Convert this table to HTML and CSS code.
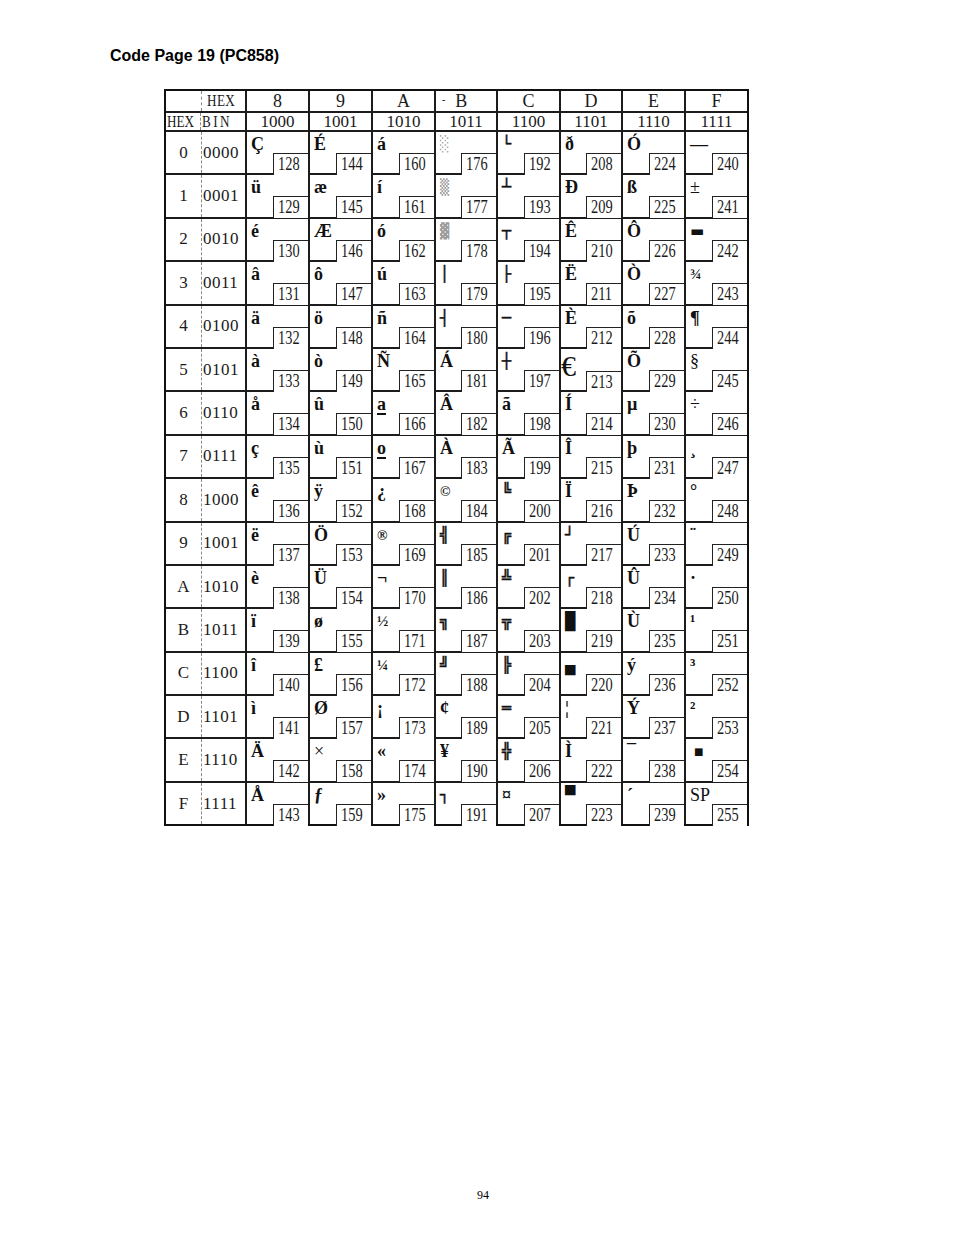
FILE: index.html
```html
<!DOCTYPE html>
<html>
<head>
<meta charset="utf-8">
<title>Code Page 19 (PC858)</title>
<link rel="stylesheet" href="styles.css">
</head>
<body>
<div class="page">
  <h1 class="title">Code Page 19 (PC858)</h1>
  <div class="table">
    <div class="lab hd1"><span class="lx"></span><span class="lb"><span class="nar">HEX</span></span></div>
    <div class="hd1 hc">8</div><div class="hd1 hc">9</div><div class="hd1 hc">A</div><div class="hd1 hc hb"><span class="tick">-</span>B</div><div class="hd1 hc">C</div><div class="hd1 hc">D</div><div class="hd1 hc">E</div><div class="hd1 hc">F</div>

    <div class="lab hd2"><span class="lx"><span class="nar">HEX</span></span><span class="lb"><span class="nar sp">BIN</span></span></div>
    <div class="hd2 hc">1000</div><div class="hd2 hc">1001</div><div class="hd2 hc">1010</div><div class="hd2 hc">1011</div><div class="hd2 hc">1100</div><div class="hd2 hc">1101</div><div class="hd2 hc">1110</div><div class="hd2 hc">1111</div>

    <div class="lab"><span class="lx">0</span><span class="lb">0000</span></div>
    <div class="c"><span class="g">Ç</span><span class="n"><i>128</i></span></div>
    <div class="c"><span class="g">É</span><span class="n"><i>144</i></span></div>
    <div class="c"><span class="g">á</span><span class="n"><i>160</i></span></div>
    <div class="c"><span class="g sh">░</span><span class="n"><i>176</i></span></div>
    <div class="c"><span class="g bx">└</span><span class="n"><i>192</i></span></div>
    <div class="c"><span class="g">ð</span><span class="n"><i>208</i></span></div>
    <div class="c"><span class="g">Ó</span><span class="n"><i>224</i></span></div>
    <div class="c"><span class="g">—</span><span class="n"><i>240</i></span></div>

    <div class="lab"><span class="lx">1</span><span class="lb">0001</span></div>
    <div class="c"><span class="g">ü</span><span class="n"><i>129</i></span></div>
    <div class="c"><span class="g">æ</span><span class="n"><i>145</i></span></div>
    <div class="c"><span class="g">í</span><span class="n"><i>161</i></span></div>
    <div class="c"><span class="g sh">▒</span><span class="n"><i>177</i></span></div>
    <div class="c"><span class="g bx">┴</span><span class="n"><i>193</i></span></div>
    <div class="c"><span class="g">Ð</span><span class="n"><i>209</i></span></div>
    <div class="c"><span class="g">ß</span><span class="n"><i>225</i></span></div>
    <div class="c"><span class="g lt">±</span><span class="n"><i>241</i></span></div>

    <div class="lab"><span class="lx">2</span><span class="lb">0010</span></div>
    <div class="c"><span class="g">é</span><span class="n"><i>130</i></span></div>
    <div class="c"><span class="g">Æ</span><span class="n"><i>146</i></span></div>
    <div class="c"><span class="g">ó</span><span class="n"><i>162</i></span></div>
    <div class="c"><span class="g sh">▓</span><span class="n"><i>178</i></span></div>
    <div class="c"><span class="g bx">┬</span><span class="n"><i>194</i></span></div>
    <div class="c"><span class="g">Ê</span><span class="n"><i>210</i></span></div>
    <div class="c"><span class="g">Ô</span><span class="n"><i>226</i></span></div>
    <div class="c"><span class="g bar">▬</span><span class="n"><i>242</i></span></div>

    <div class="lab"><span class="lx">3</span><span class="lb">0011</span></div>
    <div class="c"><span class="g">â</span><span class="n"><i>131</i></span></div>
    <div class="c"><span class="g">ô</span><span class="n"><i>147</i></span></div>
    <div class="c"><span class="g">ú</span><span class="n"><i>163</i></span></div>
    <div class="c"><span class="g bx">│</span><span class="n"><i>179</i></span></div>
    <div class="c"><span class="g bx">├</span><span class="n"><i>195</i></span></div>
    <div class="c"><span class="g">Ë</span><span class="n"><i>211</i></span></div>
    <div class="c"><span class="g">Ò</span><span class="n"><i>227</i></span></div>
    <div class="c"><span class="g fr">¾</span><span class="n"><i>243</i></span></div>

    <div class="lab"><span class="lx">4</span><span class="lb">0100</span></div>
    <div class="c"><span class="g">ä</span><span class="n"><i>132</i></span></div>
    <div class="c"><span class="g">ö</span><span class="n"><i>148</i></span></div>
    <div class="c"><span class="g">ñ</span><span class="n"><i>164</i></span></div>
    <div class="c"><span class="g bx">┤</span><span class="n"><i>180</i></span></div>
    <div class="c"><span class="g bx">─</span><span class="n"><i>196</i></span></div>
    <div class="c"><span class="g">È</span><span class="n"><i>212</i></span></div>
    <div class="c"><span class="g">õ</span><span class="n"><i>228</i></span></div>
    <div class="c"><span class="g">¶</span><span class="n"><i>244</i></span></div>

    <div class="lab"><span class="lx">5</span><span class="lb">0101</span></div>
    <div class="c"><span class="g">à</span><span class="n"><i>133</i></span></div>
    <div class="c"><span class="g">ò</span><span class="n"><i>149</i></span></div>
    <div class="c"><span class="g">Ñ</span><span class="n"><i>165</i></span></div>
    <div class="c"><span class="g">Á</span><span class="n"><i>181</i></span></div>
    <div class="c"><span class="g bx">┼</span><span class="n"><i>197</i></span></div>
    <div class="c"><span class="g eu">€</span><span class="n"><i>213</i></span></div>
    <div class="c"><span class="g">Õ</span><span class="n"><i>229</i></span></div>
    <div class="c"><span class="g lt">§</span><span class="n"><i>245</i></span></div>

    <div class="lab"><span class="lx">6</span><span class="lb">0110</span></div>
    <div class="c"><span class="g">å</span><span class="n"><i>134</i></span></div>
    <div class="c"><span class="g">û</span><span class="n"><i>150</i></span></div>
    <div class="c"><span class="g ul">a</span><span class="n"><i>166</i></span></div>
    <div class="c"><span class="g">Â</span><span class="n"><i>182</i></span></div>
    <div class="c"><span class="g">ã</span><span class="n"><i>198</i></span></div>
    <div class="c"><span class="g">Í</span><span class="n"><i>214</i></span></div>
    <div class="c"><span class="g">µ</span><span class="n"><i>230</i></span></div>
    <div class="c"><span class="g lt">÷</span><span class="n"><i>246</i></span></div>

    <div class="lab"><span class="lx">7</span><span class="lb">0111</span></div>
    <div class="c"><span class="g">ç</span><span class="n"><i>135</i></span></div>
    <div class="c"><span class="g">ù</span><span class="n"><i>151</i></span></div>
    <div class="c"><span class="g ul">o</span><span class="n"><i>167</i></span></div>
    <div class="c"><span class="g">À</span><span class="n"><i>183</i></span></div>
    <div class="c"><span class="g">Ã</span><span class="n"><i>199</i></span></div>
    <div class="c"><span class="g">Î</span><span class="n"><i>215</i></span></div>
    <div class="c"><span class="g">þ</span><span class="n"><i>231</i></span></div>
    <div class="c"><span class="g">¸</span><span class="n"><i>247</i></span></div>

    <div class="lab"><span class="lx">8</span><span class="lb">1000</span></div>
    <div class="c"><span class="g">ê</span><span class="n"><i>136</i></span></div>
    <div class="c"><span class="g">ÿ</span><span class="n"><i>152</i></span></div>
    <div class="c"><span class="g">¿</span><span class="n"><i>168</i></span></div>
    <div class="c"><span class="g sm">©</span><span class="n"><i>184</i></span></div>
    <div class="c"><span class="g bx">╚</span><span class="n"><i>200</i></span></div>
    <div class="c"><span class="g">Ï</span><span class="n"><i>216</i></span></div>
    <div class="c"><span class="g">Þ</span><span class="n"><i>232</i></span></div>
    <div class="c"><span class="g">°</span><span class="n"><i>248</i></span></div>

    <div class="lab"><span class="lx">9</span><span class="lb">1001</span></div>
    <div class="c"><span class="g">ë</span><span class="n"><i>137</i></span></div>
    <div class="c"><span class="g">Ö</span><span class="n"><i>153</i></span></div>
    <div class="c"><span class="g sm">®</span><span class="n"><i>169</i></span></div>
    <div class="c"><span class="g bx">╣</span><span class="n"><i>185</i></span></div>
    <div class="c"><span class="g bx">╔</span><span class="n"><i>201</i></span></div>
    <div class="c"><span class="g bx">┘</span><span class="n"><i>217</i></span></div>
    <div class="c"><span class="g">Ú</span><span class="n"><i>233</i></span></div>
    <div class="c"><span class="g">¨</span><span class="n"><i>249</i></span></div>

    <div class="lab"><span class="lx">A</span><span class="lb">1010</span></div>
    <div class="c"><span class="g">è</span><span class="n"><i>138</i></span></div>
    <div class="c"><span class="g">Ü</span><span class="n"><i>154</i></span></div>
    <div class="c"><span class="g">¬</span><span class="n"><i>170</i></span></div>
    <div class="c"><span class="g bx">║</span><span class="n"><i>186</i></span></div>
    <div class="c"><span class="g bx">╩</span><span class="n"><i>202</i></span></div>
    <div class="c"><span class="g bx">┌</span><span class="n"><i>218</i></span></div>
    <div class="c"><span class="g">Û</span><span class="n"><i>234</i></span></div>
    <div class="c"><span class="g">·</span><span class="n"><i>250</i></span></div>

    <div class="lab"><span class="lx">B</span><span class="lb">1011</span></div>
    <div class="c"><span class="g">ï</span><span class="n"><i>139</i></span></div>
    <div class="c"><span class="g">ø</span><span class="n"><i>155</i></span></div>
    <div class="c"><span class="g fr">½</span><span class="n"><i>171</i></span></div>
    <div class="c"><span class="g bx">╗</span><span class="n"><i>187</i></span></div>
    <div class="c"><span class="g bx">╦</span><span class="n"><i>203</i></span></div>
    <div class="c"><span class="g blk">█</span><span class="n"><i>219</i></span></div>
    <div class="c"><span class="g">Ù</span><span class="n"><i>235</i></span></div>
    <div class="c"><span class="g">¹</span><span class="n"><i>251</i></span></div>

    <div class="lab"><span class="lx">C</span><span class="lb">1100</span></div>
    <div class="c"><span class="g">î</span><span class="n"><i>140</i></span></div>
    <div class="c"><span class="g">£</span><span class="n"><i>156</i></span></div>
    <div class="c"><span class="g fr">¼</span><span class="n"><i>172</i></span></div>
    <div class="c"><span class="g bx">╝</span><span class="n"><i>188</i></span></div>
    <div class="c"><span class="g bx">╠</span><span class="n"><i>204</i></span></div>
    <div class="c"><span class="g blk">▄</span><span class="n"><i>220</i></span></div>
    <div class="c"><span class="g">ý</span><span class="n"><i>236</i></span></div>
    <div class="c"><span class="g">³</span><span class="n"><i>252</i></span></div>

    <div class="lab"><span class="lx">D</span><span class="lb">1101</span></div>
    <div class="c"><span class="g">ì</span><span class="n"><i>141</i></span></div>
    <div class="c"><span class="g">Ø</span><span class="n"><i>157</i></span></div>
    <div class="c"><span class="g">¡</span><span class="n"><i>173</i></span></div>
    <div class="c"><span class="g">¢</span><span class="n"><i>189</i></span></div>
    <div class="c"><span class="g bx">═</span><span class="n"><i>205</i></span></div>
    <div class="c"><span class="g">¦</span><span class="n"><i>221</i></span></div>
    <div class="c"><span class="g">Ý</span><span class="n"><i>237</i></span></div>
    <div class="c"><span class="g">²</span><span class="n"><i>253</i></span></div>

    <div class="lab"><span class="lx">E</span><span class="lb">1110</span></div>
    <div class="c"><span class="g">Ä</span><span class="n"><i>142</i></span></div>
    <div class="c"><span class="g lt">×</span><span class="n"><i>158</i></span></div>
    <div class="c"><span class="g">«</span><span class="n"><i>174</i></span></div>
    <div class="c"><span class="g">¥</span><span class="n"><i>190</i></span></div>
    <div class="c"><span class="g bx">╬</span><span class="n"><i>206</i></span></div>
    <div class="c"><span class="g">Ì</span><span class="n"><i>222</i></span></div>
    <div class="c"><span class="g">¯</span><span class="n"><i>238</i></span></div>
    <div class="c"><span class="g sq">■</span><span class="n"><i>254</i></span></div>

    <div class="lab"><span class="lx">F</span><span class="lb">1111</span></div>
    <div class="c"><span class="g">Å</span><span class="n"><i>143</i></span></div>
    <div class="c"><span class="g">ƒ</span><span class="n"><i>159</i></span></div>
    <div class="c"><span class="g">»</span><span class="n"><i>175</i></span></div>
    <div class="c"><span class="g bx">┐</span><span class="n"><i>191</i></span></div>
    <div class="c"><span class="g">¤</span><span class="n"><i>207</i></span></div>
    <div class="c"><span class="g blk">▀</span><span class="n"><i>223</i></span></div>
    <div class="c"><span class="g">´</span><span class="n"><i>239</i></span></div>
    <div class="c"><span class="g spc">SP</span><span class="n"><i>255</i></span></div>
  </div>
  <div class="folio">94</div>
</div>
</body>
</html>
```

FILE: styles.css
```css
html, body {
  margin: 0;
  padding: 0;
  background: #fff;
}

.page {
  width: 954px;
  padding-top: 47px;
  color: #111;
}

.title {
  margin: 0 0 0 110px;
  font: bold 16px/18px "Liberation Sans", Arial, sans-serif;
  color: #000;
}

.table {
  margin: 24px 0 0 164px;
  width: max-content;
  display: grid;
  grid-template-columns: 79px 61px 61px 61px 60px 61px 60px 61px 61px;
  grid-template-rows: 20px 17px repeat(16, 41.4px);
  gap: 2px;
  background: #1c1c1c;
  border: 2px solid #111;
  font-family: "Liberation Serif", "Times New Roman", serif;
}

.table > div {
  background: #fff;
}

/* header cells */
.hc {
  display: flex;
  align-items: center;
  justify-content: center;
  color: #1a1a1a;
  overflow: hidden;
}

.hd1 {
  font-size: 18px;
  line-height: 20px;
}

.hd2 {
  font-size: 17px;
  line-height: 17px;
}

.hb {
  justify-content: flex-start;
  padding-left: 6px;
  gap: 10px;
}

.tick {
  font-size: 10px;
  line-height: 10px;
  font-weight: bold;
  margin-top: -3px;
}

.nar {
  display: inline-block;
  transform: scaleX(0.82);
  transform-origin: left center;
  white-space: nowrap;
}

.sp {
  letter-spacing: 3px;
}

/* label column */
.lab {
  display: flex;
  align-items: stretch;
  font-size: 17px;
  color: #1a1a1a;
  overflow: hidden;
}

.lx {
  width: 35px;
  flex: none;
  border-right: 1px dashed #8a8a8a;
  display: flex;
  align-items: center;
  justify-content: center;
}

.hd2 .lx {
  justify-content: flex-start;
  padding-left: 1px;
  box-sizing: border-box;
}

.lb {
  flex: 1;
  display: flex;
  align-items: center;
  padding-left: 1px;
  letter-spacing: 0.5px;
}

.hd1 .lb {
  padding-left: 5px;
}

.hd1 .lb .nar,
.hd2 .lb .nar,
.hd2 .lx .nar {
  font-size: 16px;
}

/* character cells */
.c {
  display: flex;
  flex-direction: column;
  align-items: flex-start;
  padding: 4px 0 0 4px;
  box-sizing: border-box;
  min-height: 0;
}

.g {
  font: bold 18px/17px "Liberation Serif", "DejaVu Serif", serif;
  color: #111;
  height: 17px;
  white-space: nowrap;
}

.n {
  margin-top: auto;
  align-self: flex-end;
  flex: none;
  width: 35px;
  height: 22px;
  box-sizing: border-box;
  border-left: 1px solid #222;
  border-top: 1px solid #222;
  padding-left: 4px;
  font-size: 18px;
  line-height: 20px;
  color: #1a1a1a;
  background: #fff;
}

.n i {
  display: inline-block;
  font-style: normal;
  transform: scaleX(0.8);
  transform-origin: left center;
}

.bx {
  font: bold 15px/17px "DejaVu Sans Mono", monospace;
  -webkit-text-stroke: 0.5px #111;
}

.sh {
  font: 15px/17px "DejaVu Sans Mono", monospace;
  color: #999;
}

.blk {
  font: 17px/17px "DejaVu Sans Mono", monospace;
}

.bar {
  font: 15px/17px "DejaVu Sans", sans-serif;
}

.sq {
  font: 10px/17px "DejaVu Sans", sans-serif;
  padding-left: 4px;
}

.lt {
  font-weight: normal;
}

.sm {
  font-size: 14px;
}

.fr {
  font-size: 15px;
}

.ul {
  text-decoration: underline;
  text-decoration-thickness: 2px;
  text-underline-offset: 3px;
}

.eu {
  font: 30px/17px "Liberation Serif", serif;
  margin-left: -4px;
  margin-top: 4px;
  height: 14px;
  position: relative;
  z-index: 1;
}

.spc {
  font-weight: normal;
}

.folio {
  margin-top: 362px;
  padding-left: 12px;
  text-align: center;
  font: 12px/14px "Liberation Serif", "Times New Roman", serif;
  color: #000;
}
```
